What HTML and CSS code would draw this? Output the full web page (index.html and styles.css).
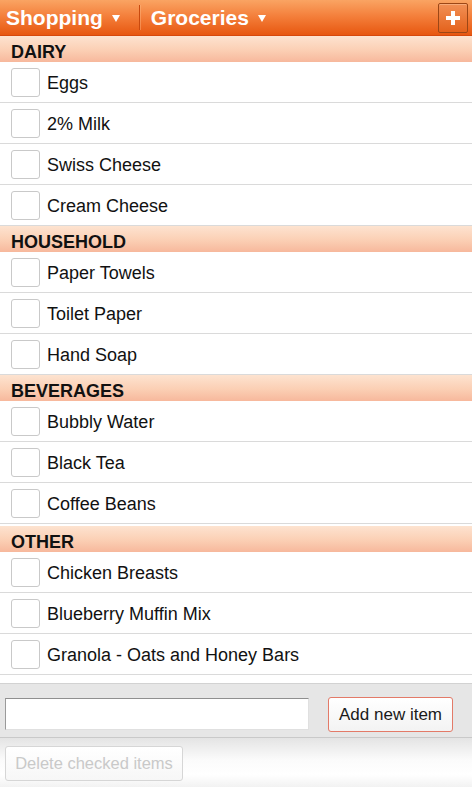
FILE: index.html
```html
<!DOCTYPE html>
<html>
<head>
<meta charset="utf-8">
<link rel="stylesheet" href="styles.css">
</head>
<body>
<header class="topbar">
  <div class="menu menu-first"><span class="menu-label">Shopping</span><span class="caret"></span></div>
  <span class="divider"></span>
  <div class="menu"><span class="menu-label">Groceries</span><span class="caret"></span></div>
  <button class="add-btn" aria-label="Add">
    <svg width="16" height="16" viewBox="0 0 16 16"><path d="M6 1h4v5h5v4h-5v5H6v-5H1V6h5z" fill="#fff"/></svg>
  </button>
</header>
<main class="list">
  <section>
    <h2 class="cat">DAIRY</h2>
    <div class="item"><span class="box"></span><span class="label">Eggs</span></div>
    <div class="item"><span class="box"></span><span class="label">2% Milk</span></div>
    <div class="item"><span class="box"></span><span class="label">Swiss Cheese</span></div>
    <div class="item"><span class="box"></span><span class="label">Cream Cheese</span></div>
  </section>
  <section>
    <h2 class="cat">HOUSEHOLD</h2>
    <div class="item"><span class="box"></span><span class="label">Paper Towels</span></div>
    <div class="item"><span class="box"></span><span class="label">Toilet Paper</span></div>
    <div class="item"><span class="box"></span><span class="label">Hand Soap</span></div>
  </section>
  <section>
    <h2 class="cat">BEVERAGES</h2>
    <div class="item"><span class="box"></span><span class="label">Bubbly Water</span></div>
    <div class="item"><span class="box"></span><span class="label">Black Tea</span></div>
    <div class="item"><span class="box"></span><span class="label">Coffee Beans</span></div>
  </section>
  <section class="section-last">
    <h2 class="cat">OTHER</h2>
    <div class="item"><span class="box"></span><span class="label">Chicken Breasts</span></div>
    <div class="item"><span class="box"></span><span class="label">Blueberry Muffin Mix</span></div>
    <div class="item"><span class="box"></span><span class="label">Granola - Oats and Honey Bars</span></div>
  </section>
</main>
<div class="addbar">
  <input class="new-input" type="text">
  <button class="btn-add">Add new item</button>
</div>
<footer class="appbar">
  <button class="btn-delete" disabled>Delete checked items</button>
</footer>
</body>
</html>
```
FILE: styles.css
```css
html, body {
  margin: 0;
  padding: 0;
}
body {
  width: 472px;
  height: 787px;
  overflow: hidden;
  font-family: "Liberation Sans", Arial, sans-serif;
  background: #fff;
  color: #111;
}
.topbar {
  height: 36px;
  box-sizing: border-box;
  display: flex;
  align-items: center;
  background: linear-gradient(#faa463 0%, #f4803c 45%, #e75710 100%);
  border-bottom: 1px solid #d6480c;
  padding-left: 6px;
  padding-right: 4px;
}
.menu {
  display: flex;
  align-items: center;
  color: #fff;
  font-weight: bold;
  font-size: 21px;
}
.menu-label {
  line-height: 24px;
  padding-top: 1px;
}
.caret {
  width: 0;
  height: 0;
  border-left: 4px solid transparent;
  border-right: 4px solid transparent;
  border-top: 7px solid #fff;
  margin-left: 9px;
  margin-top: 2px;
}
.divider {
  width: 1px;
  height: 25px;
  background: #c9490e;
  box-shadow: 1px 0 0 rgba(255, 190, 140, 0.4);
  margin-left: 19px;
  margin-right: 11px;
}
.add-btn {
  margin-left: auto;
  width: 30px;
  height: 30px;
  padding: 0;
  border: 1px solid #9c4716;
  border-radius: 2px;
  background: linear-gradient(#f29055, #e4621c);
  display: flex;
  align-items: center;
  justify-content: center;
  box-shadow: inset 0 1px 0 rgba(255, 200, 160, 0.5);
}
.list {
  padding-bottom: 8px;
}
.section-last {
  margin-top: 2px;
}
.cat {
  margin: 0;
  height: 26px;
  box-sizing: border-box;
  padding: 7px 0 0 11px;
  line-height: 19px;
  font-size: 18px;
  font-weight: bold;
  color: #111;
  background: linear-gradient(#fde3d0 0%, #fbcfb4 55%, #f7b89c 100%);
}
.item {
  height: 41px;
  box-sizing: border-box;
  border-bottom: 1px solid #dadada;
  display: flex;
  align-items: center;
  padding-left: 11px;
}
.box {
  width: 29px;
  height: 29px;
  box-sizing: border-box;
  border: 1px solid #c9c9c9;
  border-radius: 3px;
  background: #fff;
  flex-shrink: 0;
}
.label {
  margin-left: 7px;
  font-size: 18px;
  padding-top: 3px;
  color: #111;
}
.addbar {
  height: 55px;
  box-sizing: border-box;
  background: #e6e6e6;
  border-top: 1px solid #d2d2d2;
  border-bottom: 1px solid #c9c9c9;
  display: flex;
  align-items: flex-start;
  padding: 13px 0 0 5px;
}
.new-input {
  width: 304px;
  height: 32px;
  box-sizing: border-box;
  margin: 1px 0 0 0;
  border: 1px solid #e0e0e0;
  border-top-color: #8f8f8f;
  border-left-color: #9a9a9a;
  background: #fff;
  padding: 0 4px;
  font-size: 17px;
  font-family: inherit;
}
.btn-add {
  margin-left: 19px;
  width: 125px;
  height: 35px;
  box-sizing: border-box;
  border: 1px solid #e37a68;
  border-radius: 3px;
  background: linear-gradient(#ffffff, #f3f3f3);
  font-family: inherit;
  font-size: 17px;
  color: #1a1a1a;
  padding: 0;
}
.appbar {
  height: 49px;
  box-sizing: border-box;
  background: linear-gradient(#e4e4e4 0%, #fbfbfb 45%, #ffffff 75%, #f2f2f2 100%);
  padding: 8px 0 0 5px;
}
.btn-delete {
  width: 178px;
  height: 35px;
  box-sizing: border-box;
  border: 1px solid #d6d6d6;
  border-radius: 3px;
  background: linear-gradient(#ffffff, #f7f7f7);
  font-family: inherit;
  font-size: 16.5px;
  color: #c9c9c9;
  padding: 0;
}
```
